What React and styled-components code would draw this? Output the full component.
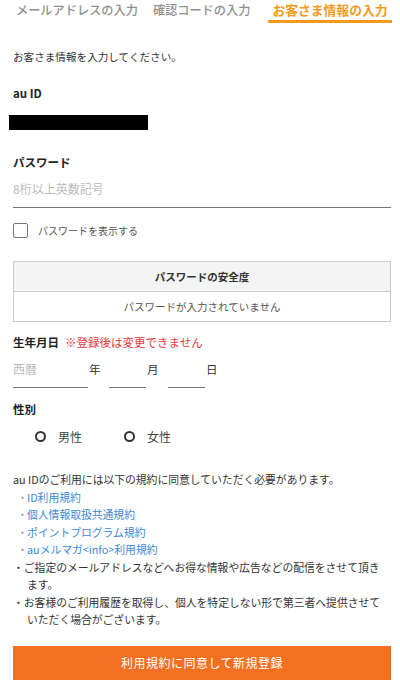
import React, { useState } from 'react';
import styled, { createGlobalStyle } from 'styled-components';

const GlobalStyle = createGlobalStyle`
  html, body {
    margin: 0;
    padding: 0;
    background: #fff;
  }
  body {
    font-family: "Noto Sans CJK JP", "Noto Sans", sans-serif;
    color: #333;
  }
`;

const Page = styled.div`
  width: 400px;
  padding: 0 9px 0 13px;
  box-sizing: border-box;
`;

// tabs at the top of the step form
const Tabs = styled.div`
  display: flex;
  align-items: flex-start;
  padding-left: 3px;
  white-space: nowrap;
`;

const Tab = styled.div`
  font-size: ${(p) => (p.active ? 12.8 : 12.2)}px;
  line-height: 20px;
  padding: 0 ${(p) => (p.active ? 4 : 0)}px;
  margin-left: ${(p) => p.gap || 0}px;
  color: ${(p) => (p.active ? '#f39a1c' : '#8f8f8f')};
  font-weight: ${(p) => (p.active ? 700 : 500)};
  border-bottom: 3px solid ${(p) => (p.active ? '#f39a1c' : 'transparent')};
`;

const Lead = styled.p`
  margin: 26px 0 0;
  font-size: 10.6px;
  line-height: 16px;
  color: #333;
`;

const Label = styled.div`
  font-size: 11.5px;
  line-height: 16px;
  font-weight: 700;
  color: #222;
  margin-top: ${(p) => p.top || 0}px;
  display: flex;
  align-items: center;
`;

const Notice = styled.span`
  color: #e8383d;
  font-weight: 400;
  margin-left: 6px;
  font-size: 11.5px;
`;

const Redacted = styled.div`
  width: 139px;
  height: 15px;
  background: #000;
  margin: 14px 0 0 -4px;
`;

const TextInput = styled.input`
  display: block;
  width: 100%;
  box-sizing: border-box;
  height: 38px;
  margin: 0;
  padding: 0;
  border: none;
  border-bottom: 1px solid #777;
  font-family: inherit;
  font-size: 12px;
  color: #333;
  outline: none;
  background: transparent;
  &::placeholder {
    color: #bbb;
  }
`;

const CheckRow = styled.label`
  display: flex;
  align-items: center;
  margin-top: 15px;
  font-size: 10px;
  color: #555;
`;

const CheckBox = styled.span`
  flex-shrink: 0;
  width: 13px;
  height: 13px;
  border: 1px solid #777;
  border-radius: 2px;
  margin-right: 10px;
  background: ${(p) => (p.checked ? '#f37021' : '#fff')};
`;

const StrengthTable = styled.div`
  margin-top: 23px;
  border: 1px solid #ccc;
`;

const StrengthHead = styled.div`
  height: 29px;
  background: #f4f4f4;
  border-bottom: 1px solid #ccc;
  display: flex;
  align-items: center;
  justify-content: center;
  font-size: 10.5px;
  font-weight: 700;
  color: #333;
`;

const StrengthBody = styled.div`
  height: 29px;
  display: flex;
  align-items: center;
  justify-content: center;
  font-size: 10.5px;
  color: #555;
`;

const DateRow = styled.div`
  display: flex;
  align-items: center;
`;

const DateInput = styled(TextInput)`
  width: ${(p) => p.w}px;
  margin-left: ${(p) => p.gap || 0}px;
`;

const Unit = styled.span`
  font-size: 11.5px;
  color: #333;
  margin-left: 1px;
  width: 10px;
`;

const RadioRow = styled.div`
  display: flex;
  align-items: center;
  height: 24px;
  margin-top: 7px;
  padding-left: 22px;
`;

const RadioItem = styled.label`
  display: flex;
  align-items: center;
  font-size: 12px;
  color: #444;
  margin-right: 42px;
`;

const RadioCircle = styled.span`
  flex-shrink: 0;
  box-sizing: border-box;
  width: 11px;
  height: 11px;
  border: 2px solid #333;
  border-radius: 50%;
  margin-right: 12px;
`;

const Terms = styled.div`
  margin-top: 23px;
  font-size: 10.8px;
  line-height: 17.5px;
  color: #333;
  white-space: nowrap;
`;

const LinkList = styled.ul`
  list-style: none;
  margin: 0;
  padding: 0;
`;

const LinkItem = styled.li`
  padding-left: 4px;
  &::before {
    content: '・';
    color: #8a9bb0;
    display: inline-block;
    width: 10px;
  }
  a {
    color: #3a8ad8;
    text-decoration: none;
  }
`;

const Note = styled.p`
  margin: 0;
  padding-left: 14px;
  text-indent: -14px;
`;

const Submit = styled.button`
  display: block;
  width: 100%;
  height: 34px;
  margin-top: 17px;
  border: none;
  background: #f37021;
  color: #fff;
  font-family: inherit;
  font-size: 12px;
  letter-spacing: 0.5px;
  cursor: pointer;
`;

const termLinks = ['ID利用規約', '個人情報取扱共通規約', 'ポイントプログラム規約', 'auメルマガ<info>利用規約'];

export default function App() {
  const [showPw, setShowPw] = useState(false);

  return (
    <>
      <GlobalStyle />
      <Page>
        <Tabs>
          <Tab>メールアドレスの入力</Tab>
          <Tab gap={15}>確認コードの入力</Tab>
          <Tab gap={18} active>お客さま情報の入力</Tab>
        </Tabs>

        <Lead>お客さま情報を入力してください。</Lead>

        <Label top={20}>au ID</Label>
        <Redacted />

        <Label top={24}>パスワード</Label>
        <TextInput type={showPw ? 'text' : 'password'} placeholder="8桁以上英数記号" />

        <CheckRow onClick={() => setShowPw(!showPw)}>
          <CheckBox checked={showPw} />
          パスワードを表示する
        </CheckRow>

        <StrengthTable>
          <StrengthHead>パスワードの安全度</StrengthHead>
          <StrengthBody>パスワードが入力されていません</StrengthBody>
        </StrengthTable>

        <Label top={12}>
          生年月日<Notice>※登録後は変更できません</Notice>
        </Label>
        <DateRow>
          <DateInput w={75} placeholder="西暦" />
          <Unit>年</Unit>
          <DateInput w={37} gap={10} />
          <Unit>月</Unit>
          <DateInput w={37} gap={11} />
          <Unit>日</Unit>
        </DateRow>

        <Label top={13}>性別</Label>
        <RadioRow>
          <RadioItem>
            <RadioCircle />
            男性
          </RadioItem>
          <RadioItem>
            <RadioCircle />
            女性
          </RadioItem>
        </RadioRow>

        <Terms>
          <div>au IDのご利用には以下の規約に同意していただく必要があります。</div>
          <LinkList>
            {termLinks.map((t) => (
              <LinkItem key={t}>
                <a href="#">{t}</a>
              </LinkItem>
            ))}
          </LinkList>
          <Note>
            ・ご指定のメールアドレスなどへお得な情報や広告などの配信をさせて頂き
            <br />
            ます。
          </Note>
          <Note>
            ・お客様のご利用履歴を取得し、個人を特定しない形で第三者へ提供させて
            <br />
            いただく場合がございます。
          </Note>
        </Terms>

        <Submit>利用規約に同意して新規登録</Submit>
      </Page>
    </>
  );
}
